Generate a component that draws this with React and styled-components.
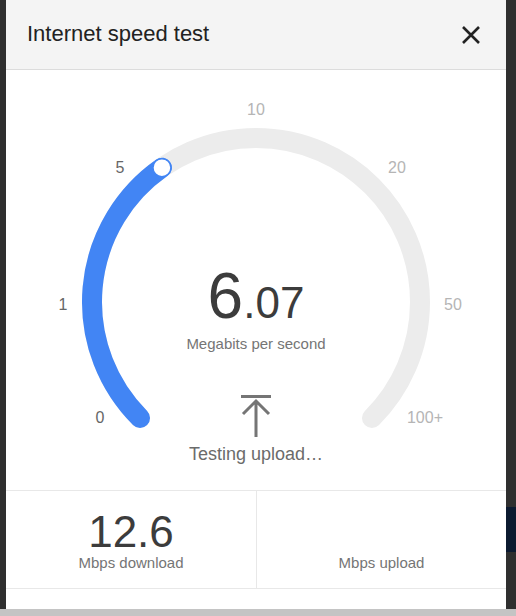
import styled, { createGlobalStyle } from 'styled-components';

const GlobalStyle = createGlobalStyle`
  html, body {
    margin: 0;
    padding: 0;
    background: #2f2f2f;
    font-family: "Liberation Sans", Arial, sans-serif;
  }
`;

const Page = styled.div`
  width: 516px;
  height: 616px;
  display: flex;
  flex-direction: column;
  overflow: hidden;
`;

const Stage = styled.div`
  flex: 1;
  display: flex;
`;

const Gutter = styled.div`
  width: ${(p) => p.width}px;
  display: flex;
  flex-direction: column;
  padding-top: ${(p) => p.pad || 0}px;
`;

const NavyBlock = styled.div`
  height: 45px;
  background: #0c1a30;
`;

const Dialog = styled.div`
  width: 500px;
  background: #fff;
  display: flex;
  flex-direction: column;
`;

const Header = styled.div`
  height: 70px;
  background: #f4f4f4;
  border-bottom: 1px solid #dcdcdc;
  display: flex;
  align-items: center;
  justify-content: space-between;
  padding: 0 24px 0 21px;
  box-sizing: border-box;
`;

const Title = styled.div`
  font-size: 22px;
  color: #222;
  padding-bottom: 2px;
`;

const CloseButton = styled.button`
  border: none;
  background: none;
  padding: 0;
  width: 22px;
  height: 22px;
  display: flex;
  align-items: center;
  justify-content: center;
  cursor: pointer;
`;

const GaugeArea = styled.div`
  position: relative;
  height: 420px;
  display: flex;
  flex-direction: column;
  align-items: center;
  padding-top: 194px;
  box-sizing: border-box;
`;

const GaugeSvg = styled.svg`
  position: absolute;
  inset: 0;
`;

const Reading = styled.div`
  position: relative;
  line-height: 1;
  color: #3c3c3c;
  font-size: 64px;
  height: 64px;
`;

const Decimals = styled.span`
  font-size: 44px;
`;

const Unit = styled.div`
  position: relative;
  margin-top: 7px;
  font-size: 15px;
  line-height: 18px;
  color: #757575;
`;

const Phase = styled.div`
  position: relative;
  margin-top: 42px;
  display: flex;
  flex-direction: column;
  align-items: center;
  gap: 6px;
`;

const PhaseText = styled.div`
  font-size: 18px;
  line-height: 22px;
  color: #6b6b6b;
`;

const Stats = styled.div`
  display: grid;
  grid-template-columns: 1fr 1fr;
  height: 97px;
  border-top: 1px solid #e8e8e8;
  border-bottom: 1px solid #e8e8e8;
`;

const Stat = styled.div`
  display: flex;
  flex-direction: column;
  align-items: center;
  justify-content: flex-end;
  padding-bottom: 16px;
  border-left: ${(p) => (p.divider ? '1px solid #e8e8e8' : 'none')};
`;

const StatValue = styled.div`
  font-size: 44px;
  line-height: 44px;
  color: #3c3c3c;
`;

const StatLabel = styled.div`
  font-size: 15px;
  line-height: 18px;
  color: #757575;
`;

const BottomBar = styled.div`
  height: 7px;
  background: #c4c4c4;
`;

const CX = 250;
const CY = 232;
const R = 164;

const point = (deg, r = R) => {
  const a = (deg * Math.PI) / 180;
  return [CX + r * Math.sin(a), CY - r * Math.cos(a)];
};

const arc = (from, to) => {
  const [x1, y1] = point(from);
  const [x2, y2] = point(to);
  const large = to - from > 180 ? 1 : 0;
  return `M ${x1} ${y1} A ${R} ${R} 0 ${large} 1 ${x2} ${y2}`;
};

const labels = [
  { text: '0', x: 94, y: 347, done: true },
  { text: '1', x: 57, y: 234, done: true },
  { text: '5', x: 114, y: 97, done: true },
  { text: '10', x: 250, y: 39 },
  { text: '20', x: 391, y: 97 },
  { text: '50', x: 447, y: 234 },
  { text: '100+', x: 419, y: 347 },
];

const progress = -35;

const App = () => {
  const [mx, my] = point(progress);
  return (
    <Page>
      <GlobalStyle />
      <Stage>
        <Gutter width={6} />
        <Dialog>
          <Header>
            <Title>Internet speed test</Title>
            <CloseButton aria-label="Close">
              <svg width="20" height="20" viewBox="0 0 20 20">
                <path d="M2 2 L18 18 M18 2 L2 18" stroke="#222" strokeWidth="2.6" />
              </svg>
            </CloseButton>
          </Header>
          <GaugeArea>
            <GaugeSvg width="500" height="420" viewBox="0 0 500 420">
              <path d={arc(-135, 135)} fill="none" stroke="#ececec" strokeWidth="20" strokeLinecap="round" />
              <path d={arc(-135, progress)} fill="none" stroke="#4285f4" strokeWidth="20" strokeLinecap="round" />
              <circle cx={mx} cy={my} r="9" fill="#fff" stroke="#4285f4" strokeWidth="1.5" />
              {labels.map((l) => (
                <text
                  key={l.text}
                  x={l.x}
                  y={l.y}
                  textAnchor="middle"
                  dominantBaseline="central"
                  fontSize="16"
                  fontFamily='"Liberation Sans", Arial, sans-serif'
                  fill={l.done ? '#666' : '#b5b5b5'}
                >
                  {l.text}
                </text>
              ))}
            </GaugeSvg>
            <Reading>
              6<Decimals>.07</Decimals>
            </Reading>
            <Unit>Megabits per second</Unit>
            <Phase>
              <svg width="32" height="42" viewBox="0 0 32 42">
                <path d="M1 1.5 H31 M16 6 V42 M3 19 L16 6 L29 19" fill="none" stroke="#757575" strokeWidth="3" />
              </svg>
              <PhaseText>Testing upload…</PhaseText>
            </Phase>
          </GaugeArea>
          <Stats>
            <Stat>
              <StatValue>12.6</StatValue>
              <StatLabel>Mbps download</StatLabel>
            </Stat>
            <Stat divider>
              <StatLabel>Mbps upload</StatLabel>
            </Stat>
          </Stats>
        </Dialog>
        <Gutter width={10} pad={507}>
          <NavyBlock />
        </Gutter>
      </Stage>
      <BottomBar />
    </Page>
  );
};

export default App;
